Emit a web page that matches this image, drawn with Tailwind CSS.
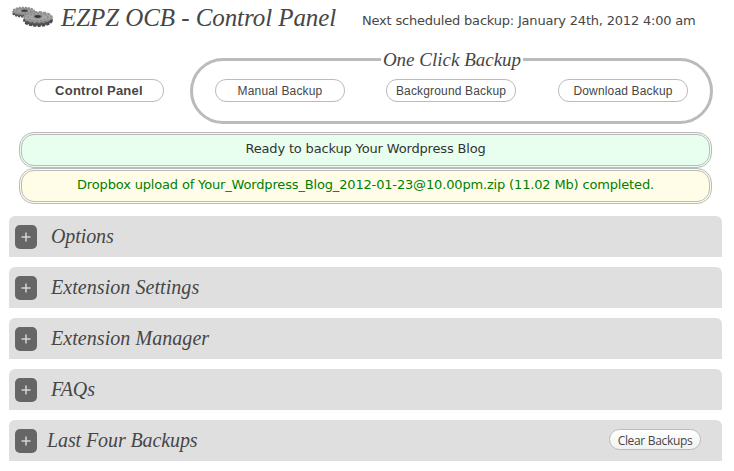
<!DOCTYPE html>
<html lang="en">
<head>
<meta charset="utf-8">
<title>EZPZ OCB - Control Panel</title>
<script src="https://cdn.jsdelivr.net/npm/@tailwindcss/browser@4"></script>
</head>
<body class="bg-white text-[#464646] w-[734px] h-[471px] overflow-hidden font-['DejaVu_Sans',Verdana,sans-serif]">
<header class="flex h-[36px] pl-[10px]">
  <svg class="w-[45px] h-[30px] shrink-0" viewBox="10 0 45 30">
    <ellipse cx="23.5" cy="13" rx="10.5" ry="3.6" fill="#555" stroke="#505050" stroke-width="2" stroke-dasharray="2 1"/>
    <ellipse cx="23.5" cy="11" rx="10.5" ry="3.4" fill="#a2a2a2" stroke="#8c8c8c" stroke-width="1.8" stroke-dasharray="2 1"/>
    <ellipse cx="23.5" cy="11" rx="7.5" ry="2.1" fill="none" stroke="#777" stroke-width=".7" stroke-dasharray="2 1"/>
    <ellipse cx="24.5" cy="10.8" rx="3.3" ry="1.3" fill="#444"/>
    <ellipse cx="38" cy="20.6" rx="13.8" ry="5.2" fill="#555" stroke="#484848" stroke-width="2.2" stroke-dasharray="3 1.3"/>
    <ellipse cx="38" cy="17.2" rx="13.8" ry="5.1" fill="#a5a5a5" stroke="#909090" stroke-width="2" stroke-dasharray="3 1.3"/>
    <ellipse cx="38" cy="17.2" rx="10" ry="3.5" fill="none" stroke="#777" stroke-width=".8" stroke-dasharray="2 1.6"/>
    <ellipse cx="37.8" cy="16.5" rx="4.3" ry="1.9" fill="#777"/>
    <ellipse cx="37.8" cy="16.5" rx="3" ry="1.3" fill="#333"/>
  </svg>
  <h1 class="ml-[6px] w-[301px] pt-[2px] font-['Liberation_Serif',serif] italic text-[25px] leading-[32px] tracking-[-0.07px] whitespace-nowrap">EZPZ OCB - Control Panel</h1>
  <p class="pt-[12px] text-[13px] leading-[18px] tracking-[-0.2px] whitespace-nowrap">Next scheduled backup: January 24th, 2012 4:00 am</p>
</header>
<nav class="flex h-[96px] pl-[34px] font-['Liberation_Sans',Arial,sans-serif] text-[12px] tracking-[0.16px]">
  <button class="mt-[43px] w-[130px] h-[23px] rounded-[11px] border border-[#bbb] font-bold text-[13px] leading-[21px] tracking-[0.26px]">Control Panel</button>
  <fieldset class="ml-[26px] mt-[22px] relative w-[523px] h-[66px] rounded-[33px] border-[3px] border-[#bbb] flex pl-[22px] pt-[18px]">
    <div class="absolute left-[188px] -top-[14px] w-[142px] h-[26px] bg-white text-center font-['Liberation_Serif',serif] italic text-[19px] leading-[25px] tracking-normal whitespace-nowrap">One Click Backup</div>
    <button class="w-[130px] h-[23px] rounded-[11px] border border-[#bbb] leading-[22px]">Manual Backup</button>
    <button class="ml-[41px] w-[130px] h-[23px] rounded-[11px] border border-[#bbb] leading-[22px]">Background Backup</button>
    <button class="ml-[42px] w-[130px] h-[23px] rounded-[11px] border border-[#bbb] leading-[22px]">Download Backup</button>
  </fieldset>
</nav>
<div class="ml-[19px] w-[693px] text-[13px] text-center leading-[28px] tracking-[-0.16px]">
  <p class="h-[36px] rounded-[15px] border-[3px] border-double border-[#bbb] bg-[#e8ffef] text-[#333]">Ready to backup Your Wordpress Blog</p>
  <p class="h-[36px] rounded-[15px] border-[3px] border-double border-[#bbb] bg-[#fffde8] text-[#008000]">Dropbox upload of Your_Wordpress_Blog_2012-01-23@10.00pm.zip (11.02 Mb) completed.</p>
</div>
<main class="mt-[12px] ml-[9px] w-[713px] flex flex-col gap-[10px] font-['Liberation_Serif',serif] italic text-[20px] leading-[24px]">
  <section class="h-[41px] rounded-t-[6px] bg-[#dfdfdf] flex pl-[6px] pt-[9px]">
    <span class="w-[22px] h-[24px] rounded-[5px] bg-[#666] flex items-center justify-center"><svg class="w-[10px] h-[10px]" viewBox="0 0 10 10"><path d="M.5 5h9M5 .5v9" stroke="#d9d5ce" stroke-width="1.5"/></svg></span>
    <h2 class="ml-[14px] -mt-[1px] tracking-[-0.1px]">Options</h2>
  </section>
  <section class="h-[41px] rounded-t-[6px] bg-[#dfdfdf] flex pl-[6px] pt-[9px]">
    <span class="w-[22px] h-[24px] rounded-[5px] bg-[#666] flex items-center justify-center"><svg class="w-[10px] h-[10px]" viewBox="0 0 10 10"><path d="M.5 5h9M5 .5v9" stroke="#d9d5ce" stroke-width="1.5"/></svg></span>
    <h2 class="ml-[14px] -mt-[1px] tracking-[0.06px]">Extension Settings</h2>
  </section>
  <section class="h-[41px] rounded-t-[6px] bg-[#dfdfdf] flex pl-[6px] pt-[9px]">
    <span class="w-[22px] h-[24px] rounded-[5px] bg-[#666] flex items-center justify-center"><svg class="w-[10px] h-[10px]" viewBox="0 0 10 10"><path d="M.5 5h9M5 .5v9" stroke="#d9d5ce" stroke-width="1.5"/></svg></span>
    <h2 class="ml-[14px] -mt-[1px] tracking-[0.06px]">Extension Manager</h2>
  </section>
  <section class="h-[41px] rounded-t-[6px] bg-[#dfdfdf] flex pl-[6px] pt-[9px]">
    <span class="w-[22px] h-[24px] rounded-[5px] bg-[#666] flex items-center justify-center"><svg class="w-[10px] h-[10px]" viewBox="0 0 10 10"><path d="M.5 5h9M5 .5v9" stroke="#d9d5ce" stroke-width="1.5"/></svg></span>
    <h2 class="ml-[14px] -mt-[1px]">FAQs</h2>
  </section>
  <section class="h-[41px] rounded-t-[6px] bg-[#dfdfdf] flex pl-[6px] pt-[9px]">
    <span class="w-[22px] h-[24px] rounded-[5px] bg-[#666] flex items-center justify-center"><svg class="w-[10px] h-[10px]" viewBox="0 0 10 10"><path d="M.5 5h9M5 .5v9" stroke="#d9d5ce" stroke-width="1.5"/></svg></span>
    <h2 class="ml-[10px] -mt-[1px] tracking-[-0.1px]">Last Four Backups</h2>
    <button class="ml-auto mr-[21px] w-[92px] h-[21px] rounded-full border border-[#bbb] bg-linear-to-b from-white to-[#f2f2f2] font-['Open_Sans',sans-serif] not-italic text-[12px] leading-[21px] tracking-[-0.33px] whitespace-nowrap">Clear Backups</button>
  </section>
</main>
</body>
</html>
